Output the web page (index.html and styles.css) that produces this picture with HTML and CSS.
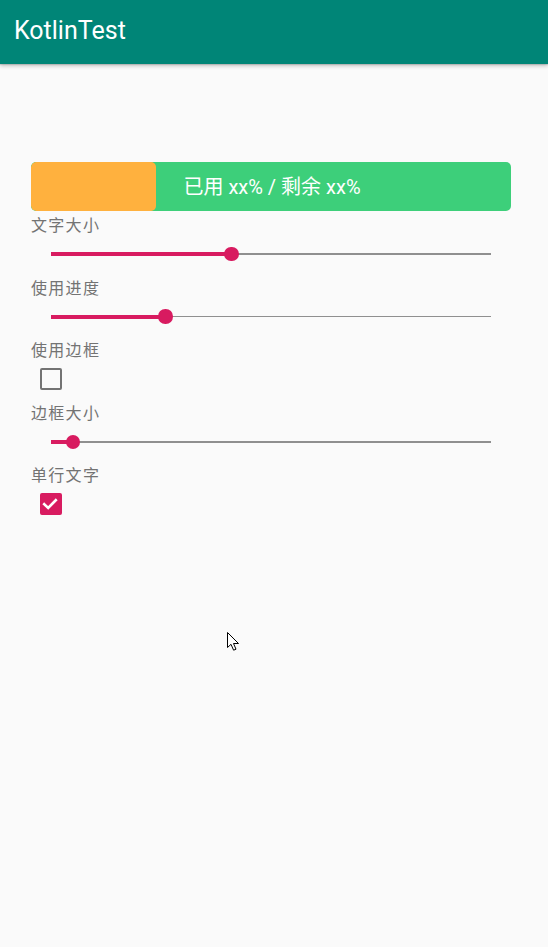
FILE: index.html
```html
<!DOCTYPE html>
<html lang="zh">
<head>
<meta charset="utf-8">
<title>KotlinTest</title>
<link rel="stylesheet" href="styles.css">
</head>
<body>
<header class="toolbar"><h1 class="title">KotlinTest</h1></header>
<main class="content">
  <div class="bar">
    <div class="bar-fill" style="width:26%"></div>
    <div class="bar-text">已用 xx% / 剩余 xx%</div>
  </div>

  <div class="row">
    <div class="label">文字大小</div>
    <div class="control seek">
      <div class="seek-fill" style="width:41%"></div>
      <div class="seek-thumb"></div>
      <div class="seek-rest"></div>
    </div>
  </div>

  <div class="row">
    <div class="label">使用进度</div>
    <div class="control seek">
      <div class="seek-fill" style="width:26%"></div>
      <div class="seek-thumb"></div>
      <div class="seek-rest"></div>
    </div>
  </div>

  <div class="row">
    <div class="label">使用边框</div>
    <div class="control check">
      <span class="box"></span>
    </div>
  </div>

  <div class="row">
    <div class="label">边框大小</div>
    <div class="control seek">
      <div class="seek-fill" style="width:5%"></div>
      <div class="seek-thumb"></div>
      <div class="seek-rest"></div>
    </div>
  </div>

  <div class="row">
    <div class="label">单行文字</div>
    <div class="control check">
      <span class="box checked">
        <svg viewBox="0 0 22 22" width="22" height="22"><path d="M5.2 11.2 L9.2 15 L16.8 7.2" fill="none" stroke="#fff" stroke-width="2.6" stroke-linecap="square"/></svg>
      </span>
    </div>
  </div>
</main>
<svg class="cursor" viewBox="0 0 13 19" width="13" height="19"><path d="M0.5 0.5 L0.5 15.5 L4 12.3 L6.6 18.2 L9 17.2 L6.5 11.5 L11.5 11.5 Z" fill="#fff" stroke="#000" stroke-width="1" stroke-linejoin="miter"/></svg>
</body>
</html>
```

FILE: styles.css
```css
* { box-sizing: border-box; }
html, body { margin: 0; padding: 0; }
body {
  background: #fafafa;
  width: 548px;
  height: 947px;
  font-family: Roboto, "Noto Sans CJK SC", sans-serif;
  overflow: hidden;
  position: relative;
}
.toolbar {
  height: 64px;
  background: #008577;
  box-shadow: 0 2px 4px rgba(0,0,0,0.22), 0 1px 1px rgba(0,0,0,0.12);
  display: flex;
  align-items: center;
  padding-left: 14px;
  position: relative;
  z-index: 1;
}
.title {
  margin: 0;
  color: #fff;
  font-family: Roboto, sans-serif;
  font-weight: 400;
  font-size: 25px;
  line-height: 28px;
  margin-top: -3px;
}
.content {
  padding: 98px 37px 0 31px;
}
.bar {
  height: 49px;
  background: #3dcf7a;
  border-radius: 5px;
  display: grid;
  overflow: hidden;
  margin-bottom: 2px;
}
.bar-fill {
  grid-area: 1 / 1;
  justify-self: start;
  height: 49px;
  background: #ffb13e;
  border-radius: 5px;
}
.bar-text {
  grid-area: 1 / 1;
  justify-self: center;
  align-self: center;
  color: #fff;
  font-family: Roboto, "Noto Sans CJK SC", sans-serif;
  font-size: 20px;
  line-height: 24px;
  margin-left: 2px;
}
.row {
  margin-bottom: 2.6px;
}
.label {
  font-family: "Noto Sans CJK SC", sans-serif;
  font-size: 16px;
  line-height: 22px;
  letter-spacing: 1.3px;
  color: #737373;
  height: 22px;
}
.control {
  height: 38px;
  display: flex;
  align-items: center;
}
.seek {
  padding: 0 20px;
}
.seek-fill {
  height: 4px;
  background: #d81b60;
  flex: none;
}
.seek-thumb {
  width: 14.5px;
  height: 14.5px;
  border-radius: 50%;
  background: #d81b60;
  flex: none;
  margin: 0 -7.25px;
  position: relative;
  z-index: 1;
}
.seek-rest {
  flex: 1;
  height: 1.5px;
  background: #8f8f8f;
}
.check {
  padding-left: 8.5px;
}
.box {
  width: 22px;
  height: 22px;
  border: 2.5px solid #737373;
  border-radius: 2px;
  display: block;
  position: relative;
}
.box.checked {
  background: #d81b60;
  border-color: #d81b60;
}
.box svg {
  display: block;
  margin: -2.5px;
}
.cursor {
  position: absolute;
  left: 226.5px;
  top: 632px;
}
```
